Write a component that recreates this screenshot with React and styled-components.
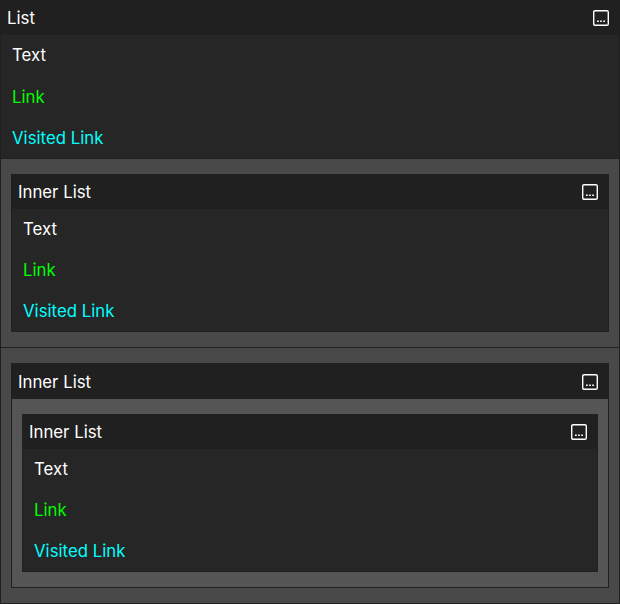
import React from "react";
import styled, { createGlobalStyle } from "styled-components";

const Global = createGlobalStyle`
  body { margin: 0; background: #202020; }
  * { box-sizing: border-box; }
`;

const Panel = styled.section`
  border: 1px solid #202020;
  background: #262626;
  color: #fff;
  font: 16.8px/20px Inter, sans-serif;
`;

const Root = styled(Panel)`
  height: 604px;
`;

const Header = styled.header`
  display: flex;
  align-items: center;
  justify-content: space-between;
  height: ${(p) => p.$height || 34}px;
  padding: 0 10px 0 6px;
  background: #202020;
`;

const Rows = styled.div`
  display: grid;
  grid-template-rows: ${(p) => (p.$roomy ? "40px 43px 40px" : "40px 41px 41px")};
`;

const Row = styled.div`
  display: flex;
  align-items: center;
  padding-left: 11px;
`;

const Anchor = styled.a`
  color: ${(p) => (p.$visited ? "#00ffff" : "#00ff00")};
`;

const Nest = styled.div`
  padding: 15px 10px;
  background: ${(p) => (p.$deep ? "#555555" : "#494949")};
  border-top: ${(p) => (p.$divided ? "1px solid #202020" : "0")};
`;

const Icon = styled.svg`
  display: block;
  width: 16px;
  height: 16px;
`;

const MoreIcon = () => (
  <Icon viewBox="0 0 16 16" fill="none">
    <rect x="0.7" y="0.7" width="14.6" height="14.6" rx="1.4" stroke="#fff" strokeWidth="1.4" />
    <path d="M4 11.2h1.75M7.1 11.2h1.75M10.2 11.2h1.75" stroke="#fff" strokeWidth="1.6" />
  </Icon>
);

const Title = ({ children, height }) => (
  <Header $height={height}>
    <span>{children}</span>
    <MoreIcon />
  </Header>
);

const Items = ({ roomy }) => (
  <Rows $roomy={roomy}>
    <Row>Text</Row>
    <Row><Anchor>Link</Anchor></Row>
    <Row><Anchor $visited>Visited Link</Anchor></Row>
  </Rows>
);

export default function App() {
  return (
    <>
      <Global />
      <Root>
        <Title>List</Title>
        <Items roomy />
        <Nest $divided>
          <Panel>
            <Title>Inner List</Title>
            <Items />
          </Panel>
        </Nest>
        <Nest $divided>
          <Panel>
            <Title height={35}>Inner List</Title>
            <Nest $deep>
              <Panel>
                <Title>Inner List</Title>
                <Items />
              </Panel>
            </Nest>
          </Panel>
        </Nest>
      </Root>
    </>
  );
}
